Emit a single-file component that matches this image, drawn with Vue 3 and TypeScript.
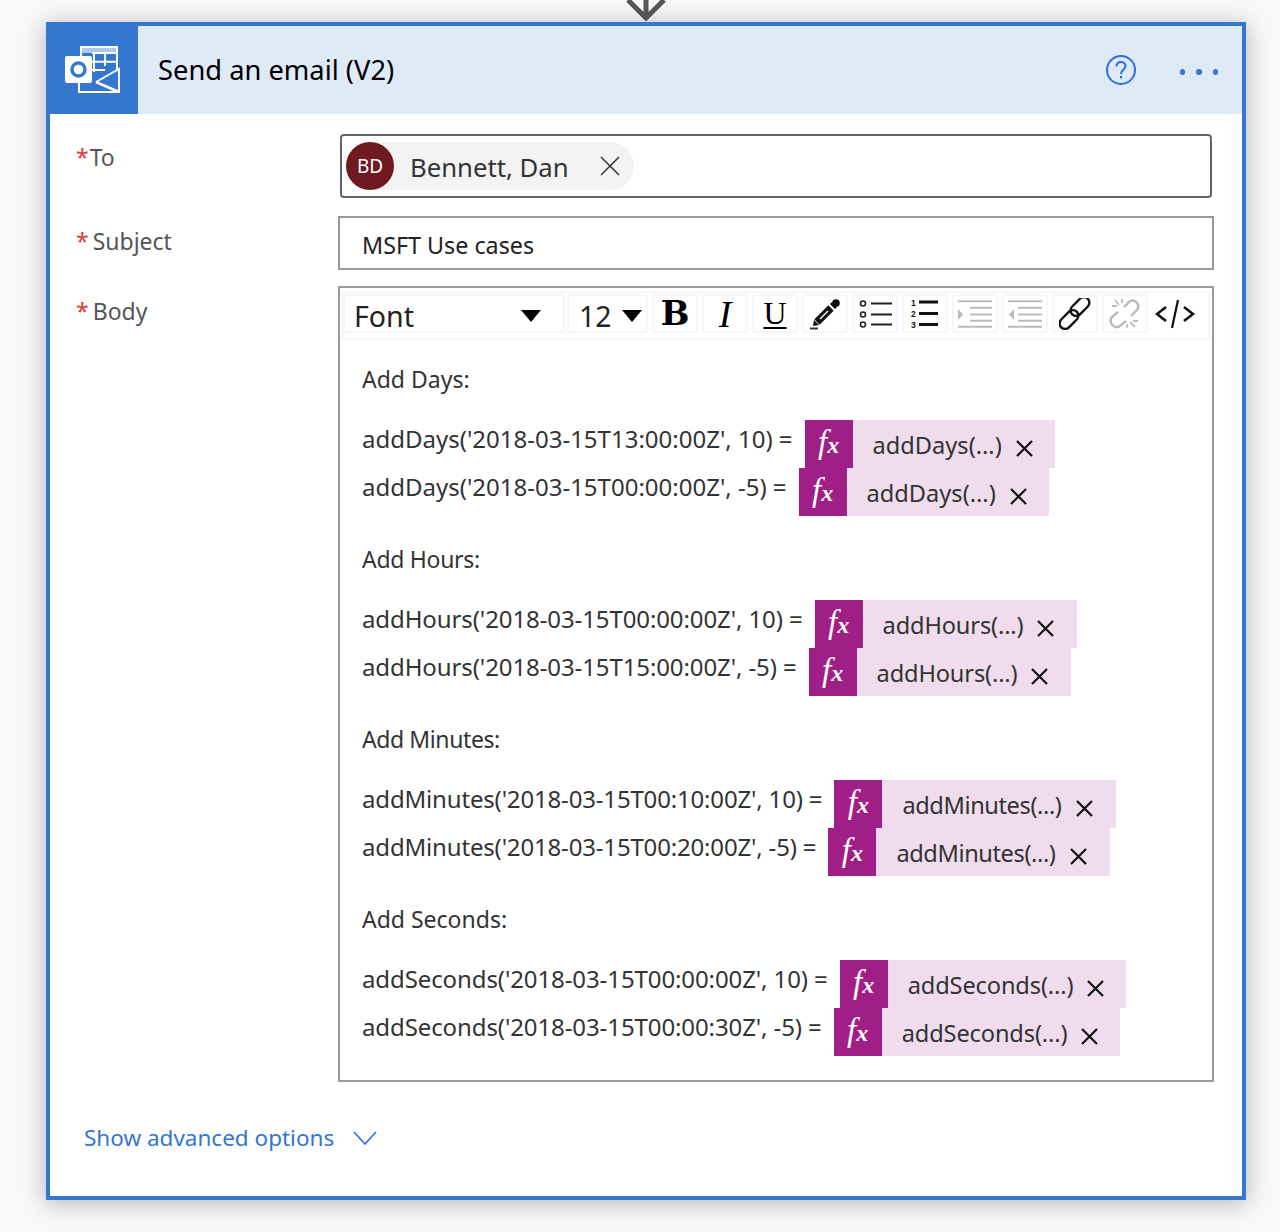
<script setup lang="ts">
interface Row { text: string; chip: string; w: number }
interface Group { title: string; titleLs: number; textLs: number; chipLs: number; rows: Row[] }
const groups: Group[] = [
  { title: 'Add Days:', titleLs: 0, textLs: 0, chipLs: 0, rows: [
    { text: "addDays('2018-03-15T13:00:00Z', 10) =", chip: 'addDays(...)', w: 202 },
    { text: "addDays('2018-03-15T00:00:00Z', -5) =", chip: 'addDays(...)', w: 202 } ] },
  { title: 'Add Hours:', titleLs: -0.3, textLs: -0.1, chipLs: -0.15, rows: [
    { text: "addHours('2018-03-15T00:00:00Z', 10) =", chip: 'addHours(...)', w: 214 },
    { text: "addHours('2018-03-15T15:00:00Z', -5) =", chip: 'addHours(...)', w: 214 } ] },
  { title: 'Add Minutes:', titleLs: -0.4, textLs: -0.17, chipLs: -0.4, rows: [
    { text: "addMinutes('2018-03-15T00:10:00Z', 10) =", chip: 'addMinutes(...)', w: 234 },
    { text: "addMinutes('2018-03-15T00:20:00Z', -5) =", chip: 'addMinutes(...)', w: 234 } ] },
  { title: 'Add Seconds:', titleLs: 0, textLs: -0.1, chipLs: -0.13, rows: [
    { text: "addSeconds('2018-03-15T00:00:00Z', 10) =", chip: 'addSeconds(...)', w: 238 },
    { text: "addSeconds('2018-03-15T00:00:30Z', -5) =", chip: 'addSeconds(...)', w: 238 } ] },
]
</script>

<template>
  <div class="page">
    <svg class="arrow" width="44" height="24" viewBox="0 0 44 24"><path d="M22 0V18M4 1L22 19L40 1" fill="none" stroke="#555" stroke-width="5"/></svg>
    <div class="card">
      <header class="head">
        <div class="logo">
          <svg width="56" height="50" viewBox="0 0 56 50" fill="none">
            <path d="M17 12V2H53V24" stroke="#fff" stroke-width="2"/>
            <path d="M17 2H53V8H17Z" fill="#fff" fill-opacity=".6"/>
            <path d="M30 8V27M41 8V21M28 8H53M28 16.7H53M28 25H41" stroke="#fff" stroke-width="2"/>
            <path d="M15 38V47H55V24L32 37" stroke="#fff" stroke-width="2"/>
            <path d="M32 37L55 47" stroke="#fff" stroke-width="2.5"/>
            <rect x="1" y="11" width="27" height="27" rx="2" fill="#fff"/>
            <circle cx="14.5" cy="24.5" r="6.5" stroke="#3576cf" stroke-width="3.4"/>
          </svg>
        </div>
        <div class="title">Send an email (V2)</div>
        <svg class="help" width="30" height="30" viewBox="0 0 30 30" fill="none">
          <circle cx="15" cy="15" r="14" stroke="#2a6ee8" stroke-width="2"/>
          <path d="M10.5 11.5C10.5 5.5 19.5 5.8 19.5 11C19.5 14.8 15 14.5 15 19" stroke="#2a6ee8" stroke-width="2"/>
          <rect x="14" y="21" width="2" height="2.4" fill="#2a6ee8"/>
        </svg>
        <div class="dots"><i></i><i></i><i></i></div>
      </header>
      <div class="form">
        <div class="field f-to">
          <div class="label"><span class="star">*</span><span>To</span></div>
          <div class="to-box">
            <div class="persona">
              <span class="avatar">BD</span>
              <span class="pname">Bennett, Dan</span>
              <svg width="20" height="20" viewBox="0 0 20 20"><path d="M1 1L19 19M19 1L1 19" stroke="#333" stroke-width="1.5"/></svg>
            </div>
          </div>
        </div>
        <div class="field f-subject">
          <div class="label"><span class="star">*</span><span>Subject</span></div>
          <div class="subject">MSFT Use cases</div>
        </div>
        <div class="field f-body">
          <div class="label"><span class="star">*</span><span>Body</span></div>
          <div class="editor">
            <div class="toolbar">
              <div class="tb sel-font"><span>Font</span><b class="caret"></b></div>
              <div class="tb sel-size"><span>12</span><b class="caret"></b></div>
              <div class="tb btn"><span class="bold">B</span></div>
              <div class="tb btn"><span class="ital">I</span></div>
              <div class="tb btn"><span class="under">U</span></div>
              <div class="tb btn">
                <svg width="32" height="32" viewBox="0 0 32 32" fill="none">
                  <path d="M8 24L22 10" stroke="#111" stroke-width="7.5"/>
                  <path d="M11 21L19 13" stroke="#fff" stroke-width="1.2"/>
                  <path d="M22 5L27 10" stroke="#111" stroke-width="3"/>
                  <circle cx="27" cy="5" r="3.8" fill="#111"/>
                  <path d="M5 22L10 27L4 28Z" fill="#111"/>
                  <path d="M1 30.5H9" stroke="#333" stroke-width="2"/>
                </svg>
              </div>
              <div class="tb btn">
                <svg width="36" height="30" viewBox="0 0 36 30" fill="none" stroke="#222">
                  <circle cx="6" cy="4.5" r="2.5" stroke-width="1.6"/><circle cx="6" cy="15.5" r="2.5" stroke-width="1.6"/><circle cx="6" cy="25.5" r="2.5" stroke-width="1.6"/>
                  <path d="M14 4.5H35M14 15.5H35M14 25.5H35" stroke-width="2"/>
                </svg>
              </div>
              <div class="tb btn">
                <svg width="30" height="30" viewBox="0 0 30 30" fill="none"><path d="M9 3H28M9 14.5H28M9 25.5H28" stroke="#111" stroke-width="3"/><text x="1" y="6.5" class="nums">1</text><text x="1" y="18" class="nums">2</text><text x="1" y="29" class="nums">3</text></svg>
              </div>
              <div class="tb btn">
                <svg width="34" height="30" viewBox="0 0 34 30" fill="none" stroke="#bbb" stroke-width="2"><path d="M0 2.2H34M12 8.8H34M12 15.5H34M12 21.8H34M0 27.8H34"/><path d="M0 10L5 15.5L0 21Z" fill="#bbb" stroke="none"/></svg>
              </div>
              <div class="tb btn">
                <svg width="34" height="30" viewBox="0 0 34 30" fill="none" stroke="#bbb" stroke-width="2"><path d="M0 2.2H34M10 8.8H34M10 15.5H34M10 21.8H34M0 27.8H34"/><path d="M6 10L1 15.5L6 21Z" fill="#bbb" stroke="none"/></svg>
              </div>
              <div class="tb btn">
                <svg width="32" height="32" viewBox="0 0 32 32" fill="none" stroke="#111" stroke-width="2.4"><rect x="10" y="3" width="22" height="11" rx="5.5" transform="rotate(-45 21 8.5)"/><rect x="-1" y="16" width="22" height="11" rx="5.5" transform="rotate(-45 10 21.5)"/></svg>
              </div>
              <div class="tb btn">
                <svg width="32" height="32" viewBox="0 0 32 32" fill="none" stroke="#bbb" stroke-width="2.4">
                  <path d="M15 9L20 4C25 0 32 6 28 12L22 18"/>
                  <path d="M17 23L11 28C6 32 -1 25 3 19L9 14"/>
                  <path d="M6 2L10 7M3 8H8M13 1V5M26 29L21 24M29 23H24M18 30V26" stroke-width="1.8"/>
                </svg>
              </div>
              <div class="tb btn code">
                <svg width="40" height="30" viewBox="0 0 40 30" fill="none" stroke="#111" stroke-width="2.6"><path d="M11 8L2 15L11 22M29 8L38 15L29 22"/><path d="M23 1L17 29" stroke-width="2.2"/></svg>
              </div>
            </div>
            <div class="content">
              <section v-for="g in groups" :key="g.title" class="group">
                <div class="gtitle" :style="{ letterSpacing: g.titleLs + 'px' }">{{ g.title }}</div>
                <div v-for="r in g.rows" :key="r.text" class="row">
                  <span class="rtext" :style="{ letterSpacing: g.textLs + 'px' }">{{ r.text }}</span>
                  <span class="chip">
                    <span class="fx"><span class="f">f</span><span class="x">x</span></span>
                    <span class="chipbody" :style="{ width: r.w + 'px' }">
                      <span class="chiptext" :style="{ letterSpacing: g.chipLs + 'px' }">{{ r.chip }}</span>
                      <svg class="cx" width="17" height="17" viewBox="0 0 17 17"><path d="M1 1L16 16M16 1L1 16" stroke="#111" stroke-width="2.2"/></svg>
                    </span>
                  </span>
                </div>
              </section>
            </div>
          </div>
        </div>
        <div class="advanced">
          <span>Show advanced options</span>
          <svg width="24" height="14" viewBox="0 0 24 14" fill="none"><path d="M1 1L12 13L23 1" stroke="#2a6ee8" stroke-width="1.6"/></svg>
        </div>
      </div>
    </div>
  </div>
</template>

<style>
html, body { margin: 0; background: #f8f8f8; }
</style>

<style scoped>
.page {
  position: relative;
  height: 1232px;
  overflow: hidden;
  padding: 22px 0 0 46px;
  box-sizing: border-box;
  background: #f8f8f8;
  font-family: "Noto Sans", sans-serif;
  color: #333;
}
.card {
  width: 1200px;
  height: 1178px;
  box-sizing: border-box;
  border: 4px solid #3576cf;
  background: #fff;
  box-shadow: 0 3px 22px rgba(0, 0, 0, .28);
}
.arrow { position: absolute; left: 624px; top: -1px; z-index: 1; }
.head { height: 88px; display: flex; align-items: center; background: #dfeaf7; }
.logo {
  width: 88px;
  height: 88px;
  background: #3576cf;
  display: flex;
  align-items: center;
  justify-content: center;
  flex: none;
  padding-right: 4px;
  box-sizing: border-box;
}
.title { margin: -2px 0 0 20px; font-size: 27.3px; color: #000; flex: 1; }
.help { margin-right: 42px; transform: translateX(-2px); }
.dots { display: flex; gap: 11px; margin: 4px 24px 0 0; }
.dots i { width: 5.5px; height: 5.5px; border-radius: 50%; background: #3576cf; display: block; }
.form { padding: 20px 0 0 0; }
.field { display: flex; }
.label { width: 262px; margin-left: 26px; font-size: 23px; color: #555; flex: none; line-height: 28px; }
.star { color: #e03a3a; margin-right: 4px; }
.f-to .label { margin-top: 9px; }
.f-to .star { margin-right: 1px; }
.to-box {
  width: 872px;
  height: 64px;
  margin-left: 2px;
  box-sizing: border-box;
  border: 2px solid #666;
  border-radius: 4px;
  padding: 6px 4px;
}
.persona { display: inline-flex; align-items: center; height: 48px; background: #f3f3f3; border-radius: 24px; padding-right: 14px; }
.avatar {
  width: 48px; height: 48px; border-radius: 50%; background: #6e1a20; color: #fff;
  display: flex; align-items: center; justify-content: center; font-size: 19px;
}
.pname { font-size: 25.7px; margin: 2px 31px 0 16px; color: #333; }
.f-subject { margin-top: 18px; }
.f-subject .label { margin-top: 11px; }
.subject {
  width: 876px; height: 54px; box-sizing: border-box; border: 2px solid #999;
  padding-left: 22px; font-size: 23.3px; line-height: 54px; color: #222;
}
.f-body { margin-top: 16px; }
.f-body .label { margin-top: 11px; }
.editor { width: 876px; height: 796px; box-sizing: border-box; border: 2px solid #999; }
.toolbar {
  display: flex; margin: 3px 2px 0; height: 49px; box-sizing: border-box;
  border: 2px solid #f6f6f6; border-radius: 3px; padding: 1px 0 0; gap: 4px; align-items: flex-start;
}
.tb {
  height: 39px; border: 2px solid #f6f6f6; box-sizing: border-box; display: flex;
  align-items: center; border-radius: 3px; color: #222; flex: none;
}
.sel-font { width: 222px; margin-left: -1px; font-size: 28.5px; justify-content: space-between; padding: 4px 22px 0 9px; }
.sel-size { width: 81px; margin-left: -2px; font-size: 28.5px; padding: 4px 0 0 10px; gap: 10px; }
.caret { width: 0; height: 0; border-left: 10px solid transparent; border-right: 10px solid transparent; border-top: 12px solid #000; }
.btn { width: 46px; justify-content: center; overflow: visible; }
.bold { font: 700 34px/1 "DejaVu Serif", serif; color: #000; margin-top: -2px; }
.ital { font: italic 38px/1 "Liberation Serif", serif; color: #000; }
.under { font: 32px/1 "Liberation Serif", serif; color: #000; text-decoration: underline; text-decoration-thickness: 2px; text-underline-offset: 3px; margin-top: -2px; }
.nums { font: 700 8.5px "Liberation Sans", sans-serif; fill: #111; }
.code { border-color: transparent; }
.content { padding: 20px 0 0 22px; }
.group { margin-bottom: 24px; }
.gtitle { height: 40px; line-height: 38px; font-size: 23px; margin-bottom: 20px; color: #333; }
.row { display: flex; height: 48px; align-items: flex-start; }
.rtext { font-size: 24px; line-height: 38px; white-space: nowrap; }
.chip { display: flex; margin-left: 12px; height: 48px; }
.fx {
  width: 48px; height: 48px; background: #a01f87; color: #fff;
  font-family: "Liberation Serif", serif; font-style: italic;
  display: flex; align-items: center; justify-content: center; line-height: 1; padding-bottom: 4px; box-sizing: border-box;
}
.f { font-size: 33px; }
.x { font-size: 24px; font-weight: 700; margin-top: 6px; }
.chipbody { display: flex; align-items: center; background: #efdcec; font-size: 23.6px; color: #333; box-sizing: border-box; padding-left: 20px; }
.chiptext { white-space: nowrap; margin: 2px 14px 0 0; }
.cx { margin-top: 9px; flex: none; }
.advanced { display: flex; align-items: center; gap: 19px; margin: 40px 0 0 34px; color: #3576cf; font-size: 22.5px; }
</style>
